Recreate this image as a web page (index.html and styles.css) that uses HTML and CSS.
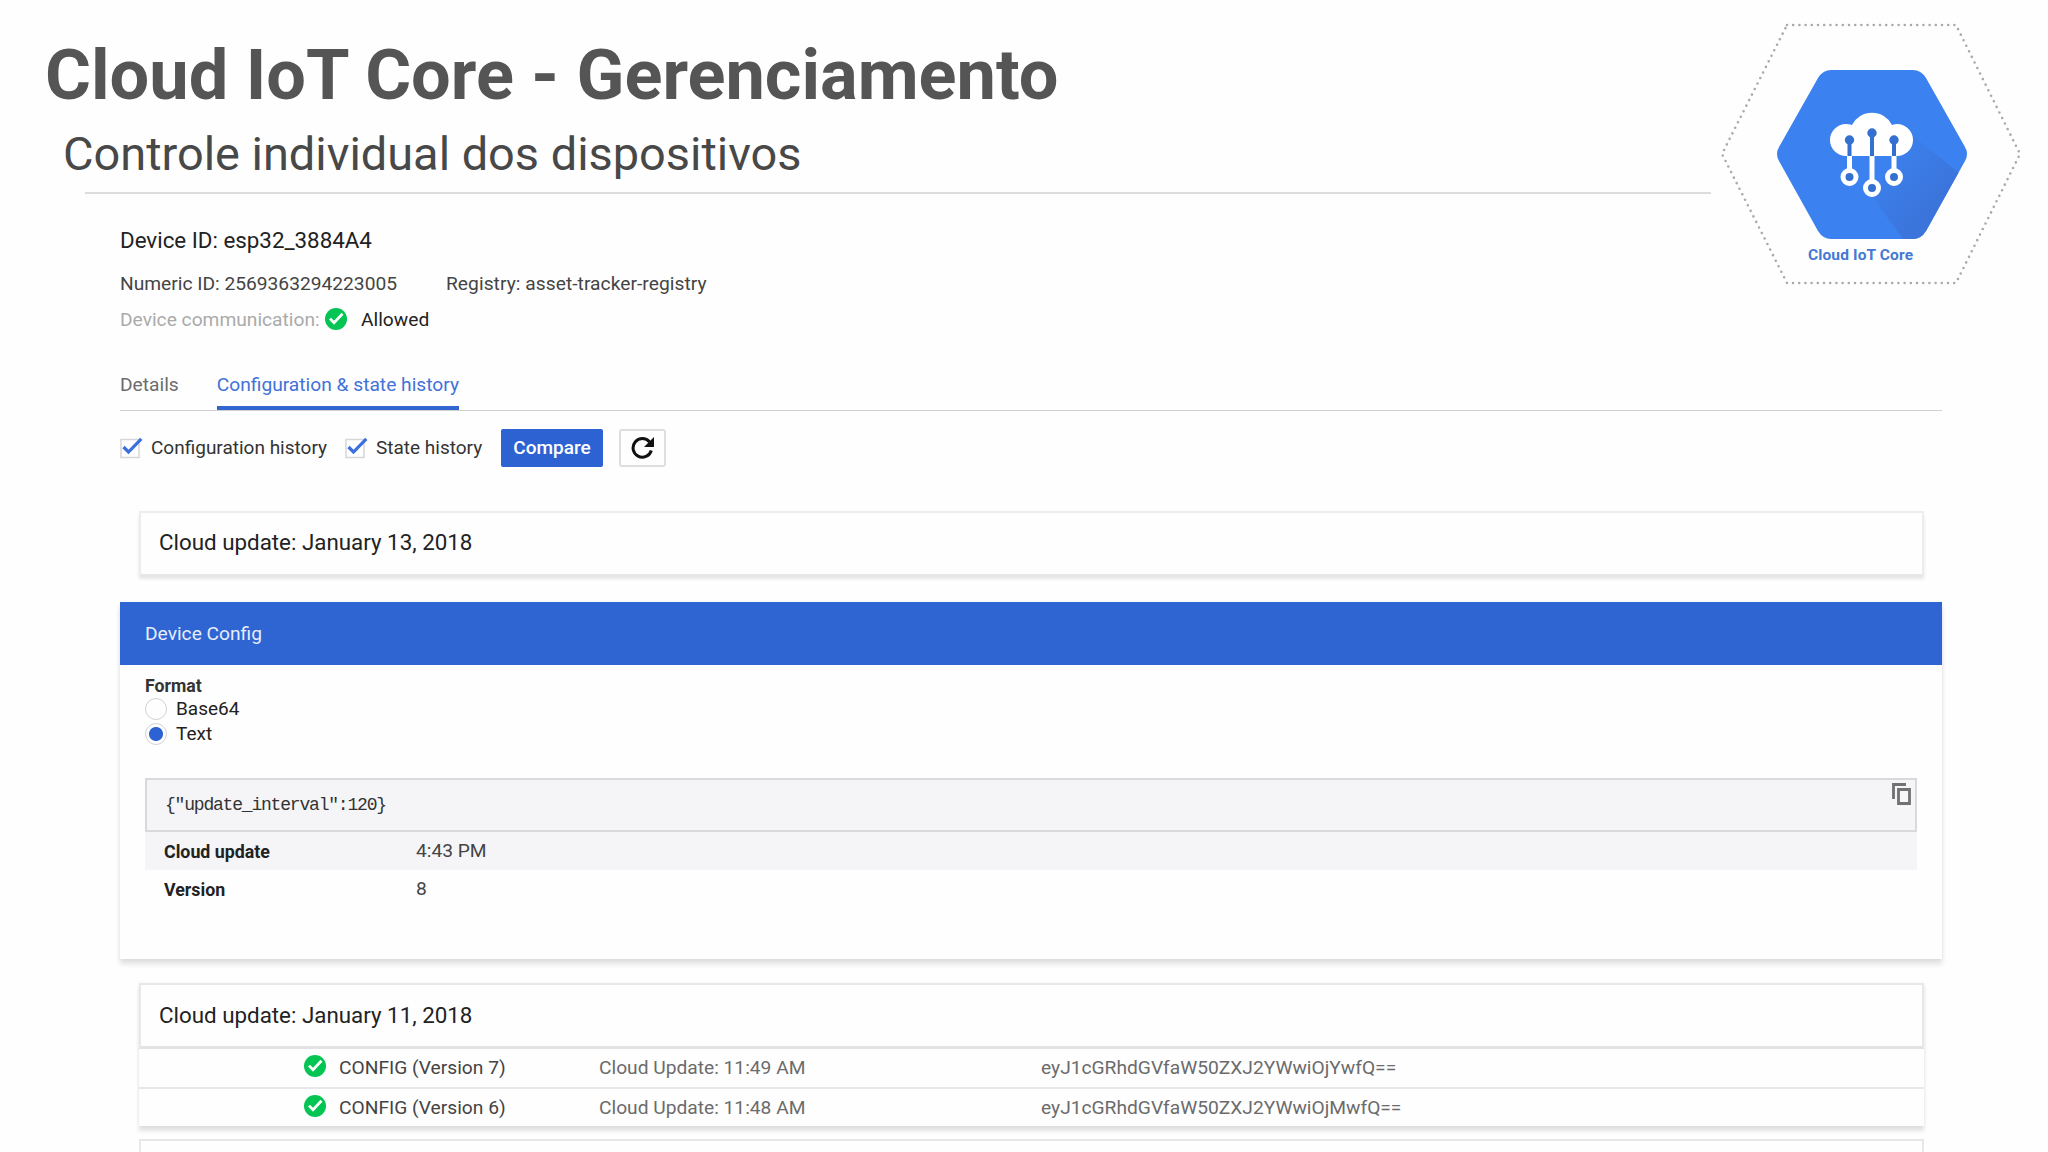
FILE: index.html
```html
<!DOCTYPE html>
<html lang="pt-BR">
<head>
  <meta charset="UTF-8">
  <meta name="viewport" content="width=device-width, initial-scale=1.0">
  <title>Cloud IoT Core - Gerenciamento</title>
  <link rel="stylesheet" href="styles.css">
</head>
<body>
  <svg class="defs" width="0" height="0">
    <symbol id="check" viewBox="0 0 22 22">
      <circle cx="11" cy="11" r="11" fill="#04c454"/>
      <path d="M5 10.600l4 4.200L17.500 5.800" fill="none" stroke="#fff" stroke-width="2.700"/>
    </symbol>
    <symbol id="checkbox" viewBox="0 0 24 22">
      <rect x="1" y="2.500" width="18" height="18" fill="#fff" stroke="#d6d6da" stroke-width="1.500"/>
      <path d="M3.500 10l5 5L21.300 1.800" fill="none" stroke="#3a6fe0" stroke-width="3.200"/>
    </symbol>
  </svg>

  <header class="header">
    <h1 class="title">Cloud IoT Core - Gerenciamento</h1>
    <h2 class="subtitle">Controle individual dos dispositivos</h2>
  </header>

  <svg class="logo" viewBox="0 0 348 300">
    <defs>
      <clipPath id="hex">
        <path d="M131 70h82q8 0 13 8l39 69q4 7 0 14l-39 70q-5 8-13 8h-82q-8 0-13-8l-39-70q-4-7 0-14l39-69q5-8 13-8z"/>
      </clipPath>
      <linearGradient id="shade" x1="0" y1="0" x2="1" y2="1">
        <stop offset="0.1" stop-color="#3b82f0"/>
        <stop offset="0.6" stop-color="#3b75dc"/>
      </linearGradient>
    </defs>
    <path class="logo-dots" d="M87 25h169l64 129-64 129H87L22 154z"/>
    <g clip-path="url(#hex)">
      <path d="M70 60h210v190H70z" fill="#3b82f0"/>
      <path d="M211 134l64 52v64h-64l-40-55 30-40z" fill="url(#shade)"/>
    </g>
    <path d="M146 156a16 16 0 0 1 0-32q3 0 6 1a22.500 22.500 0 0 1 40 0q3-1 5-1a16 16 0 0 1 0 32z" fill="#fff"/>
    <g stroke="#3470cf" stroke-width="4" fill="#3470cf">
      <path d="M149.500 140v16M172 134v22M194 140v16"/>
      <circle cx="149.500" cy="140" r="2.700"/>
      <circle cx="172" cy="133" r="2.700"/>
      <circle cx="194" cy="140" r="2.700"/>
    </g>
    <g stroke="#fff" stroke-width="5" fill="#3470cf">
      <path d="M149.500 156v14M172 156v25M194 156v14"/>
      <circle cx="149.500" cy="177" r="6.500"/>
      <circle cx="172" cy="188" r="6.500"/>
      <circle cx="194" cy="177" r="6.500"/>
    </g>
    <text class="logo-label" x="160.500" y="260" text-anchor="middle" textLength="105">Cloud IoT Core</text>
  </svg>

  <main class="console">
    <div class="device-id">Device ID: esp32_3884A4</div>
    <div class="device-info">
      <span class="numeric">Numeric ID: 2569363294223005</span>
      <span class="registry">Registry: asset-tracker-registry</span>
    </div>
    <div class="communication">
      <span class="muted">Device communication:</span>
      <svg class="icon-check"><use href="#check"/></svg>
      <span class="allowed">Allowed</span>
    </div>

    <nav class="tabs">
      <span class="tab">Details</span>
      <span class="tab active">Configuration &amp; state history</span>
    </nav>

    <div class="controls">
      <label class="option config"><svg class="icon-box"><use href="#checkbox"/></svg>Configuration history</label>
      <label class="option state"><svg class="icon-box"><use href="#checkbox"/></svg>State history</label>
      <button class="compare">Compare</button>
      <button class="refresh">
        <svg width="24" height="24" viewBox="0 0 24 24">
          <path d="M20.300 14.500A9.300 9.300 0 1 1 18.600 6" fill="none" stroke="#111" stroke-width="3"/>
          <path d="M23 1v10H13z" fill="#111"/>
        </svg>
      </button>
    </div>

    <section class="date-card">Cloud update: January 13, 2018</section>

    <section class="config-card">
      <div class="config-head">Device Config</div>
      <div class="config-body">
        <div class="format">Format</div>
        <label class="radio"><i class="dot"></i>Base64</label>
        <label class="radio"><i class="dot on"></i>Text</label>
        <div class="code">
          <code>{"update_interval":120}</code>
          <svg class="icon-copy" viewBox="0 0 20 23">
            <path d="M1.500 16V1.500H14" />
            <path d="M6.500 6.500h11v14h-11z" />
          </svg>
        </div>
        <div class="field striped"><b>Cloud update</b><span>4:43 PM</span></div>
        <div class="field"><b>Version</b><span>8</span></div>
      </div>
    </section>

    <section class="history">
      <div class="history-head">Cloud update: January 11, 2018</div>
      <div class="history-row">
        <svg class="icon-check"><use href="#check"/></svg>
        <span class="version">CONFIG (Version 7)</span>
        <span class="time">Cloud Update: 11:49 AM</span>
        <span class="payload">eyJ1cGRhdGVfaW50ZXJ2YWwiOjYwfQ==</span>
      </div>
      <div class="history-row">
        <svg class="icon-check"><use href="#check"/></svg>
        <span class="version">CONFIG (Version 6)</span>
        <span class="time">Cloud Update: 11:48 AM</span>
        <span class="payload">eyJ1cGRhdGVfaW50ZXJ2YWwiOjMwfQ==</span>
      </div>
    </section>

    <section class="next-card"></section>
  </main>
</body>
</html>
```

FILE: styles.css
```css
* {
  margin: 0;
  padding: 0;
  box-sizing: border-box;
}

body {
  position: relative;
  width: 2048px;
  height: 1152px;
  overflow: hidden;
  background: #fefefe;
  font-family: Roboto, sans-serif;
  font-size: 19.2px;
  line-height: 26px;
  color: #333;
}

.defs {
  position: absolute;
}

span, b, label, code {
  white-space: nowrap;
}

/* slide header */
.header {
  width: 1711px;
  height: 194px;
  padding-top: 34px;
}

.title {
  padding-left: 45px;
  font-size: 70.3px;
  line-height: 82px;
  font-weight: 700;
  color: #555;
}

.subtitle {
  margin: 10px 0 0 85px;
  height: 68px;
  border-bottom: 2px solid #dcdcdc;
  text-indent: -22px;
  font-size: 46.9px;
  line-height: 56px;
  font-weight: 400;
  color: #484848;
}

.logo {
  position: absolute;
  top: 0;
  right: 0;
  width: 348px;
  height: 300px;
}

.logo-dots {
  fill: none;
  stroke: #aaa;
  stroke-width: 2.6;
  stroke-linecap: round;
  stroke-dasharray: 0 6.2;
}

.logo-label {
  font-size: 15.5px;
  font-weight: 700;
  fill: #4479d4;
}

/* console */
.console {
  width: 1822px;
  margin-left: 120px;
  padding-top: 33px;
}

.device-id {
  font-size: 22.35px;
  color: #222;
}

.device-info {
  display: flex;
  margin-top: 18px;
  color: #444;
}

.numeric {
  width: 326px;
}

.registry {
  letter-spacing: 0.05px;
}

.communication {
  display: flex;
  align-items: center;
  margin-top: 10px;
  height: 26px;
}

.muted {
  width: 205px;
  color: #aaa;
}

.icon-check {
  flex: none;
  width: 22px;
  height: 22px;
}

.communication .icon-check {
  margin-top: -3px;
}

.allowed {
  margin-left: 14px;
  color: #222;
}

.tabs {
  display: flex;
  gap: 38px;
  height: 78px;
  padding-top: 39px;
  border-bottom: 1px solid #d0d0d2;
}

.tab {
  height: 38px;
  color: #6c6c6c;
}

.tab.active {
  border-bottom: 4px solid #3367d0;
  color: #4272d8;
}

.controls {
  display: flex;
  align-items: center;
  margin-top: 17px;
  height: 39px;
  font-size: 19px;
}

.option {
  display: flex;
  align-items: center;
}

.config {
  width: 225px;
}

.state {
  width: 156px;
}

.icon-box {
  width: 24px;
  height: 22px;
  margin-right: 7px;
}

.compare {
  width: 102px;
  height: 38px;
  border: 0;
  border-radius: 2px;
  background: #2d62d3;
  font: 500 19px Roboto, sans-serif;
  color: #fff;
}

.refresh {
  display: flex;
  align-items: center;
  justify-content: center;
  width: 47px;
  height: 38px;
  margin-left: 16px;
  border: 2px solid #dedee0;
  border-radius: 3px;
  background: #fefefe;
}

/* history cards */
.date-card {
  height: 63px;
  margin: 44px 18px 0 19px;
  padding: 16px 18px;
  border: 2px solid #ededef;
  border-bottom: 0;
  box-shadow: 0 5px 3px #e6e5e7;
  font-size: 22.35px;
  color: #222;
}

.config-card {
  height: 357px;
  margin-top: 28px;
  background: #fefefe;
  box-shadow: 0 5px 5px rgba(40, 40, 60, 0.14), 0 0 3px rgba(40, 40, 60, 0.05);
}

.config-head {
  height: 63px;
  padding-left: 25px;
  background: #2f64d3;
  line-height: 63px;
  color: #e6edfb;
}

.config-body {
  padding: 10px 25px 0;
}

.format {
  height: 21px;
  font-size: 17.7px;
  font-weight: 700;
  line-height: 22px;
}

.radio {
  display: flex;
  align-items: center;
  height: 25px;
  font-size: 19px;
  color: #222;
}

.dot {
  width: 22px;
  height: 22px;
  margin-right: 9px;
  border: 1.5px solid #d2d2d6;
  border-radius: 50%;
}

.dot.on {
  background: radial-gradient(circle, #2d62d3 6.5px, transparent 7.5px);
}

.code {
  display: flex;
  justify-content: space-between;
  height: 54px;
  margin-top: 32px;
  padding: 3px 3px 0 18px;
  border: 2px solid #d9d9db;
  background: #f5f5f8;
}

.code code {
  font: 18px/44px "Liberation Mono", monospace;
  letter-spacing: -1.2px;
}

.icon-copy {
  width: 20px;
  height: 23px;
  fill: none;
  stroke: #717171;
  stroke-width: 2.8;
}

.field {
  display: grid;
  grid-template-columns: 252px 1fr;
  height: 38px;
  padding-left: 19px;
  line-height: 37px;
}

.field b {
  padding-top: 1px;
  font-size: 17.8px;
  color: #222;
}

.field span {
  color: #444;
}

.striped {
  background: #f5f5f8;
}

.history {
  height: 143px;
  margin: 24px 18px 0 19px;
  box-shadow: 0 5px 4px rgba(40, 40, 60, 0.13), 0 0 3px rgba(40, 40, 60, 0.05);
}

.history-head {
  height: 66px;
  padding: 17px 18px;
  border: 2px solid #e8e8eb;
  border-bottom: 3px solid #e3e3e6;
  font-size: 22.35px;
  color: #222;
}

.history-row {
  display: grid;
  grid-template-columns: 35px 260px 442px 1fr;
  height: 38px;
  padding: 6px 0 0 165px;
  background: #fefefe;
  color: #6b6b6b;
}

.history-row + .history-row {
  height: 39px;
  border-top: 2px solid #e8e8ec;
}

.version {
  color: #444;
}

.next-card {
  height: 60px;
  margin: 13px 18px 0 19px;
  border: 2px solid #e8e8eb;
}
```
